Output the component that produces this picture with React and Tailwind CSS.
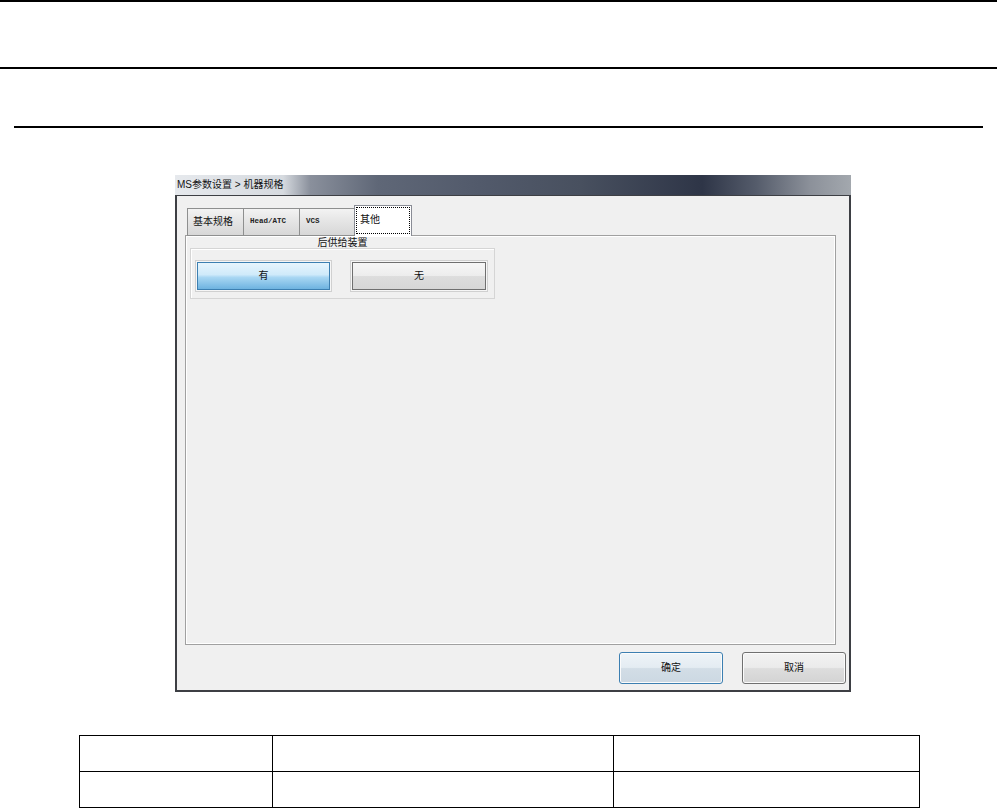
import React from 'react';

const tabs = [
  { id: 'basic', label: '基本规格', mono: false },
  { id: 'head', label: 'Head/ATC', mono: true },
  { id: 'vcs', label: 'VCS', mono: true },
];

const Tab = ({ label, mono }) => (
  <div className="w-[56px] h-[28px] border border-r-0 border-[#8e8f8f] bg-[linear-gradient(to_bottom,#f3f3f3,#e4e4e4_50%,#d7d7d7)] flex items-center pl-[5px]">
    <span
      className={
        mono
          ? "font-['Liberation_Mono',monospace] font-bold text-[7.5px] leading-none text-[#222] pl-[1px]"
          : 'text-[10px] leading-none text-[#111]'
      }
    >
      {label}
    </span>
  </div>
);

const PlainButton = ({ label, width, blue }) => (
  <div
    className={`h-[32px] ${width} rounded-[3px] border flex items-center justify-center text-[10px] leading-none text-[#111] shadow-[inset_0_0_0_1px_#fbfbfb] ${
      blue
        ? 'border-[#3c7fb1] bg-[linear-gradient(to_bottom,#eef4f8,#e4ecf2_48%,#d2dde6_52%,#ccd8e2)]'
        : 'border-[#707070] bg-[linear-gradient(to_bottom,#f2f2f2,#ebebeb_48%,#dddddd_52%,#d3d3d3)]'
    }`}
  >
    {label}
  </div>
);

const App = () => {
  return (
    <div className="w-[997px] h-[808px] bg-white overflow-hidden font-['Liberation_Sans','Noto_Sans_CJK_SC',sans-serif]">
      <div className="h-[2px] bg-black" />
      <div className="mt-[65px] h-[2px] bg-black" />
      <div className="mt-[57px] ml-[14px] w-[969px] h-[2px] bg-black" />

      {/* dialog screenshot */}
      <div className="mt-[47px] ml-[175px] w-[676px] h-[517px] flex flex-col">
        <div className="h-[20px] flex items-center pl-[2px] bg-[linear-gradient(to_right,#e6e9ed_0%,#d6dadf_16%,#8a909c_20%,#5f6777_30%,#525a6b_45%,#48505f_60%,#2e3547_78%,#555c6b_86%,#8c919a_94%,#a3a8ae_100%)]">
          <span className="text-[10px] leading-none text-[#151515] whitespace-nowrap">
            MS参数设置 &gt; 机器规格
          </span>
        </div>
        <div className="flex-1 border-x-2 border-b-2 border-t border-[#3d3f44] bg-[#f0f0f0] flex flex-col">
          {/* tab strip */}
          <div className="mt-[9px] ml-[10px] h-[31px] flex items-end relative z-10">
            {tabs.map((t) => (
              <Tab key={t.id} label={t.label} mono={t.mono} />
            ))}
            <div className="w-[58px] h-[31px] border border-b-0 border-[#898c95] bg-white p-[1px] -ml-[1px]">
              <div className="h-[27px] border border-dotted border-black flex items-start pt-[7px] pl-[3px]">
                <span className="text-[10px] leading-none text-[#111]">其他</span>
              </div>
            </div>
          </div>

          {/* tab panel */}
          <div className="-mt-[1px] ml-[8px] w-[651px] h-[410px] border border-[#a0a0a0] bg-[#f0f0f0] shadow-[inset_1px_1px_0_#ffffff,inset_-1px_-1px_0_#ffffff]">
            <div className="ml-[4px] mt-[1px] w-[305px] flex flex-col">
              <div className="h-[11px] flex items-center justify-center text-[10px] leading-none text-[#111]">
                后供给装置
              </div>
              <div className="h-[51px] border border-[#d5d5d5] shadow-[inset_1px_1px_0_#ffffff] flex items-start gap-[18px] pl-[4px] pt-[11px]">
                <div className="w-[137px] h-[32px] border border-[#d0d0d0] p-[1px] bg-[#f6f6f6]">
                  <div className="h-full border border-[#3c7fb1] bg-[linear-gradient(to_bottom,#e7f5fd,#cfeafa_45%,#a9d7f3_55%,#6eb3e0)] flex items-center justify-center text-[10px] leading-none text-[#111]">
                    有
                  </div>
                </div>
                <div className="w-[138px] h-[32px] border border-[#d0d0d0] p-[1px] bg-[#f6f6f6]">
                  <div className="h-full border border-[#6f6f6f] bg-[linear-gradient(to_bottom,#f6f6f6,#ededed_48%,#dddddd_52%,#d6d6d6)] flex items-center justify-center text-[10px] leading-none text-[#111]">
                    无
                  </div>
                </div>
              </div>
            </div>
          </div>

          {/* dialog buttons */}
          <div className="mt-[7px] flex justify-end gap-[19px] pr-[3px]">
            <PlainButton label="确定" width="w-[104px]" blue />
            <PlainButton label="取消" width="w-[104px]" />
          </div>
        </div>
      </div>

      {/* empty table below the figure */}
      <table className="mt-[43px] ml-[79px] w-[841px] border-collapse">
        <tbody>
          {[0, 1].map((r) => (
            <tr key={r} className="h-[36px]">
              <td className="w-[193px] border-[1.5px] border-black" />
              <td className="w-[341px] border-[1.5px] border-black" />
              <td className="border-[1.5px] border-black" />
            </tr>
          ))}
        </tbody>
      </table>
    </div>
  );
};

export default App;
